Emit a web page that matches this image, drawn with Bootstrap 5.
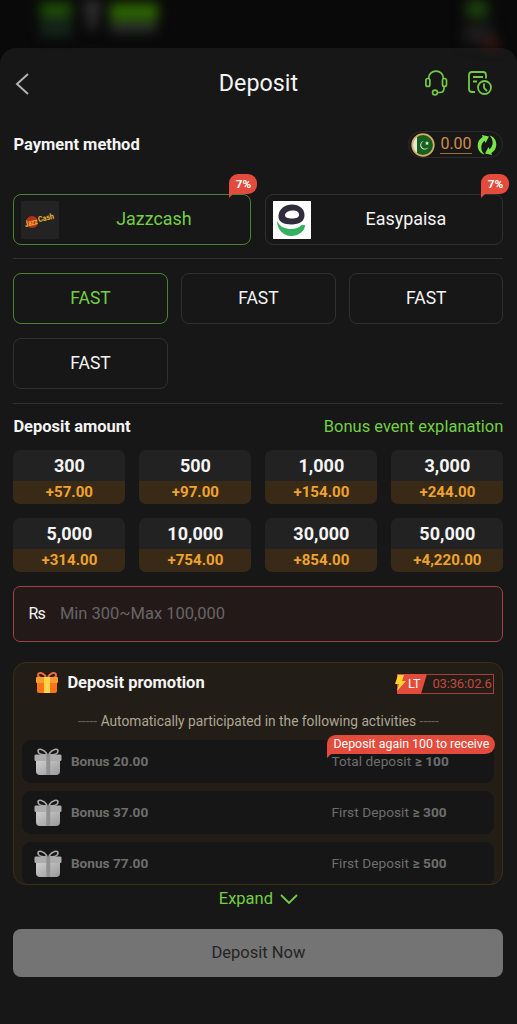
<!DOCTYPE html>
<html lang="en">
<head>
<meta charset="utf-8">
<meta name="viewport" content="width=device-width, initial-scale=1">
<title>Deposit</title>
<link href="https://cdn.jsdelivr.net/npm/bootstrap@5.3.0/dist/css/bootstrap.min.css" rel="stylesheet">
<style>
body{background:#090909;font-family:Roboto,"Liberation Sans",sans-serif;color:#f4f4f4;line-height:1.2;height:1024px}
svg{display:block;flex:none}
.backdrop-area{height:48px}
.blur-art{filter:blur(6px)}
.sheet{height:976px;background:#171717;border-radius:16px 16px 0 0;padding:0 13.6px 0 13.4px}
.green{color:#73cf43}
.head{height:69px}
.head h1{font-size:23.3px;font-weight:400;line-height:28px}
.head-side{width:78px}
.sec-title{font-size:16.5px;font-weight:700}
.pay-row{height:27px;margin-top:14px}
.wallet{width:95px;height:27px;border:1px solid #2c2c2c;border-radius:14px;padding-left:2px}
.wallet u{text-decoration:none;border-bottom:1px solid #a06a3a;color:#d08d4d;font-size:16px;line-height:18px;margin:0 5px 0 5px}
.choice{height:51px;border:1px solid #303030;border-radius:8px;font-size:17.5px}
.choice.on{border-color:#4b8330;color:#73cf43}
.methods{margin-top:36px;gap:14px}
.methods .choice{padding-left:7px;font-size:17.9px}
.methods .choice>.flex-fill{padding:0 2px 2px 0}
.flag7{top:-21px;right:-7px;width:28px;height:20px;background:#e34c3c;border-radius:9px 9px 9px 0;font-size:11.8px;font-weight:700;line-height:20px;text-align:center;color:#fff}
.tail::after{content:"";position:absolute;left:0;top:calc(100% - 1px);border-top:5px solid #e34c3c;border-right:5px solid transparent}
.line{height:1px;background:#313131}
.fasts{display:grid;grid-template-columns:repeat(3,1fr);gap:14px 13.5px;margin:14px 0}
.fasts .choice{padding-bottom:1px}
.amt-head{height:24px;margin-top:11px}
.amt-head span:last-child{font-size:16.5px}
.amts{display:grid;grid-template-columns:repeat(4,1fr);gap:14px;margin-top:11px}
.tile{height:54px;border-radius:7px;background:#222223;overflow:hidden;text-align:center;font-weight:700}
.tile div:first-child{height:31px;font-size:18px;line-height:32px}
.tile div:last-child{height:23px;font-size:15.1px;line-height:23px;background:#382a16;color:#efa22f}
.entry{height:56px;margin-top:14px;border:1px solid #9d4246;border-radius:7px;background:#241919;font-size:16px;padding-left:14px;padding-bottom:1px}
.entry .rs{letter-spacing:-.8px}
.entry .hint{color:#696565;margin-left:15px;font-size:16.5px}
.promo{height:223px;margin-top:20px;border:1px solid #3a3015;border-radius:13px;background:#221d16;overflow:hidden;padding:0 8px}
.promo-head{height:39px;padding-left:13px}
.lt{height:20px;margin-top:2px}
.lt-time{border:1px solid #a93e37;border-left:0;height:20px;color:#c4483f;font-size:13px;line-height:18px;width:67px;padding-left:5px;letter-spacing:-.15px}
.auto{height:38px;color:#aca694;font-size:13.75px;line-height:38px;text-align:center;white-space:nowrap}
.auto i{font-style:normal;color:#68635a;letter-spacing:.05px}
.bonus{height:43px;background:#161616;border-radius:9px;margin-bottom:8px;padding-left:12px;color:#6e6e6e;font-size:13.65px}
.bonus b{font-weight:700}
.bonus>b{margin-left:8.5px}
.bonus .cond{width:163px;letter-spacing:.06px}
.again{top:-5px;right:-1px;width:168px;height:19px;border-radius:9px 10px 10px 0;background:#e34c3c;color:#fff;font-size:12.4px;line-height:18px;text-align:center;white-space:nowrap}
.expand{height:27px;font-size:16.5px;gap:7px}
.go{height:48px;margin-top:17px;border:0;border-radius:8px;background:#747474;color:#242424;font-size:16.5px;padding:0}
</style>
</head>
<body class="overflow-hidden">
<svg width="0" height="0" class="position-absolute">
<defs>
<linearGradient id="silver" x1="0" x2="1" y1="0" y2="1"><stop offset="0" stop-color="#d0d0d0"/><stop offset="1" stop-color="#999"/></linearGradient>
<symbol id="gift" viewBox="0 0 28 28"><path d="M13 6C10 1 4 0 4 3s4 4 9 4M15 6c3-5 9-6 9-3s-4 4-9 4" fill="none" stroke="#aaa" stroke-width="1.6"/><path d="M2 12h24v11q0 4-4 4H6q-4 0-4-4z" fill="url(#silver)"/><rect x=".5" y="6.5" width="27" height="6.500" rx="1.300" fill="#adadad"/><path d="M12.300 6.500h3.900V27h-3.900z" fill="#909090"/></symbol>
</defs>
</svg>
<div class="backdrop-area">
<svg class="blur-art" width="517" height="48"><path d="M40 2h32v16H40z" fill="#1d4d09"/><path d="M40 20h32v17H40z" fill="#152419"/><path d="M83 0h18L95 31h-5z" fill="#303030"/><path d="M110 3h48v18h-48z" fill="#2c6304"/><path d="M110 23h46v9h-46z" fill="#303330"/><path d="M466 0h22v18h-22z" fill="#1c3f0e"/><path d="M464 24h30v20h-30z" fill="#1c1c1c"/><path d="M483 40h16v8h-16z" fill="#421610"/></svg>
</div>
<main class="sheet">
<header class="head d-flex align-items-center justify-content-between">
<div class="head-side"><svg width="20" height="24" fill="none" stroke="#b3b3b3" stroke-width="2"><path d="M15 3 4 13l11 10"/></svg></div>
<h1 class="m-0">Deposit</h1>
<div class="head-side d-flex">
<svg width="24" height="26" fill="none" stroke="#73c943" stroke-width="1.700"><path d="M3.500 9C3.500 4 7 1.200 11 1.200S18.500 4 18.500 9M19 16v2c0 3-2 4.500-4 4.500h-2.500"/><rect x=".9" y="8.500" width="4" height="8" rx="2"/><rect x="17.500" y="8.500" width="4" height="8" rx="2"/><circle cx="10" cy="22.500" r="2.400"/></svg>
<svg class="ms-auto" width="26" height="26" style="margin-right:10px" fill="none" stroke="#73c943" stroke-width="1.800"><path d="M8 22H5q-3 0-3-3V5q0-3 3-3h11q3 0 3 3v3.500M6 7h10M6 11.500h4"/><circle cx="17.500" cy="17.500" r="6.500"/><path d="M17 13.500V18l3 3"/></svg>
</div>
</header>
<div class="pay-row d-flex align-items-center justify-content-between">
<span class="sec-title">Payment method</span>
<div class="wallet d-flex align-items-center">
<svg width="24" height="24"><defs><clipPath id="flagclip"><circle cx="12" cy="12" r="11"/></clipPath></defs><g clip-path="url(#flagclip)"><path d="M0 0h24v24H0z" fill="#15601d"/><path d="M0 0h6v24H0z" fill="#e6e4df"/></g><circle cx="12" cy="12" r="10.800" fill="none" stroke="#d4ad63" stroke-width="1.700"/><path d="M13 8a4.300 4.300 0 1 0 4.500 6A4 4 0 1 1 13 8z" fill="#eee"/><path d="m16 8 .6 1.400 1.400.1-1 .9.300 1.500-1.300-.7-1.300.7.300-1.500-1-.9 1.400-.1z" fill="#eee"/></svg>
<u>0.00</u>
<svg width="20" height="22" fill="#79e548"><path id="turn" d="M12.500 1.500C17 2.500 19.500 6.500 19.300 11c-.2 3.500-2 6.300-5 8l.8 2L8 19.500l3.500-6.500.9 2.200C16.500 12.500 17 5.500 12.500 1.500z"/><use href="#turn" transform="rotate(180 10 11)"/></svg>
</div>
</div>
<div class="methods d-flex">
<div class="choice on position-relative d-flex align-items-center flex-fill w-50">
<svg width="38" height="38"><path d="M0 0h38v38H0z" fill="#232323"/><circle cx="11" cy="21" r="6" fill="#b92d1b"/><g transform="rotate(-14 19 20)" font-family="Roboto,sans-serif" font-weight="900" font-size="9" fill="#dfab32"><text x="3.500" y="22.500" textLength="13" lengthAdjust="spacingAndGlyphs">Jazz</text><text x="17.500" y="21" font-size="8" textLength="16" lengthAdjust="spacingAndGlyphs">Cash</text></g></svg>
<span class="flex-fill text-center">Jazzcash</span><span class="flag7 tail position-absolute">7%</span>
</div>
<div class="choice position-relative d-flex align-items-center flex-fill w-50">
<svg width="38" height="38"><path d="M0 0h38v38H0z" fill="#fff"/><path fill-rule="evenodd" d="M19 3.500c7 0 12.500 4.500 12.500 10.500C31.500 20 27 23.500 18.500 23.500S5 20.500 5.500 14.500C6 8 12 3.500 19 3.500zM20 9.500c-4 0-8 2-8 4.700 0 2.300 3 3.300 7 3.300s7-1 7-3.800-2.500-4.200-6-4.200z" fill="#302c3b"/><path d="M4 20c3 6 8 8 14 8 5 0 8-1.500 10.500-4L32 24c0 6-6 11-14 11S4 28 4 20z" fill="#34b060"/></svg>
<span class="flex-fill text-center">Easypaisa</span><span class="flag7 tail position-absolute">7%</span>
</div>
</div>
<div class="line" style="margin-top:13px"></div>
<div class="fasts">
<div class="choice on d-flex align-items-center justify-content-center">FAST</div>
<div class="choice d-flex align-items-center justify-content-center">FAST</div>
<div class="choice d-flex align-items-center justify-content-center">FAST</div>
<div class="choice d-flex align-items-center justify-content-center">FAST</div>
</div>
<div class="line"></div>
<div class="amt-head d-flex align-items-center justify-content-between"><span class="sec-title">Deposit amount</span><span class="green">Bonus event explanation</span></div>
<div class="amts">
<div class="tile"><div>300</div><div>+57.00</div></div>
<div class="tile"><div>500</div><div>+97.00</div></div>
<div class="tile"><div>1,000</div><div>+154.00</div></div>
<div class="tile"><div>3,000</div><div>+244.00</div></div>
<div class="tile"><div>5,000</div><div>+314.00</div></div>
<div class="tile"><div>10,000</div><div>+754.00</div></div>
<div class="tile"><div>30,000</div><div>+854.00</div></div>
<div class="tile"><div>50,000</div><div>+4,220.00</div></div>
</div>
<div class="entry d-flex align-items-center"><span class="rs">Rs</span><span class="hint">Min 300~Max 100,000</span></div>
<section class="promo">
<div class="promo-head d-flex align-items-center">
<svg width="24" height="24"><path d="M11 6C8 1 3 1 3 4s3 3 8 3M13 6c3-5 8-5 8-2s-3 3-8 3" fill="none" stroke="#ed6b3a" stroke-width="2"/><path d="M2 10h20v10q0 2-2 2H4q-2 0-2-2z" fill="#fb7417"/><rect x="1" y="6" width="22" height="6" rx="1" fill="#ff9b2f"/><path d="M9 6h6v16H9z" fill="#ffd34b"/></svg>
<span class="sec-title ms-1 ps-1">Deposit promotion</span>
<div class="lt d-flex ms-auto">
<svg width="33" height="20"><path d="M3 0h30l-6 20H3z" fill="#e34c3c"/><path d="M27 19.500h6M32 .5h1" stroke="#a93e37"/><path d="M4 1h6L8 7h4L3 17l2-7H1z" fill="#ffd32f"/><text x="14" y="14" font-family="Roboto,sans-serif" font-size="12.500" fill="#fff">LT</text></svg>
<div class="lt-time">03:36:02.6</div>
</div>
</div>
<div class="auto"><i>-----</i> Automatically participated in the following activities <i>-----</i></div>
<div class="bonus d-flex align-items-center position-relative"><svg width="28" height="28"><use href="#gift"/></svg><b>Bonus 20.00</b><span class="cond ms-auto">Total deposit <b>≥ 100</b></span><span class="again tail position-absolute">Deposit again 100 to receive</span></div>
<div class="bonus d-flex align-items-center"><svg width="28" height="28"><use href="#gift"/></svg><b>Bonus 37.00</b><span class="cond ms-auto">First Deposit <b>≥ 300</b></span></div>
<div class="bonus d-flex align-items-center"><svg width="28" height="28"><use href="#gift"/></svg><b>Bonus 77.00</b><span class="cond ms-auto">First Deposit <b>≥ 500</b></span></div>
</section>
<div class="expand green d-flex align-items-center justify-content-center">Expand<svg width="18" height="12" fill="none" stroke="#73cf43" stroke-width="1.800"><path d="m1 2 8 8 8-8"/></svg></div>
<button class="go w-100 d-block" type="button">Deposit Now</button>
</main>
<script src="https://cdn.jsdelivr.net/npm/bootstrap@5.3.0/dist/js/bootstrap.bundle.min.js"></script>
</body>
</html>
